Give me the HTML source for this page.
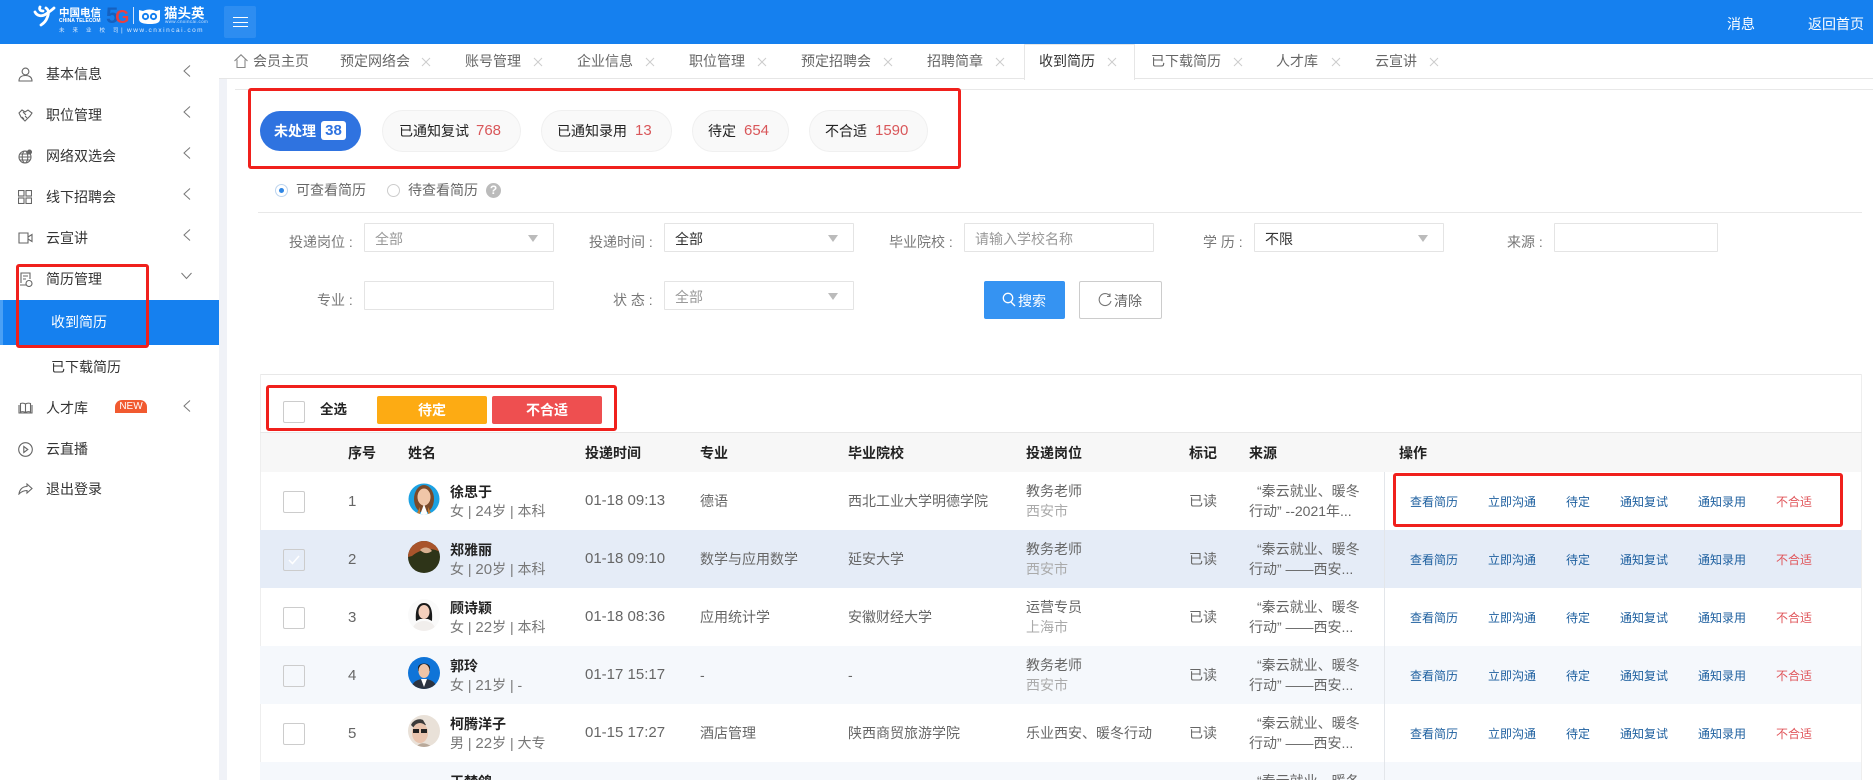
<!DOCTYPE html>
<html lang="zh-CN"><head><meta charset="utf-8"><title>收到简历</title>
<style>
*{box-sizing:border-box}
html,body{margin:0;padding:0;background:#fff;width:1873px;height:780px;overflow:hidden}
#w{position:absolute;left:0;top:0;width:1873px;height:780px;overflow:hidden;font:14px/20px "Liberation Sans","Noto Sans CJK SC",sans-serif;color:#666}
.t{position:absolute;white-space:nowrap;line-height:20px}
.a{position:absolute}
.side{color:#333}
.tab{color:#666;top:51px}
.lab{color:#777}
.box{position:absolute;border:1px solid #e4e4e4;height:29px;background:#fff;border-radius:1px}
.sel{color:#999}
.sel:after{content:"";position:absolute;right:15px;top:11px;border-left:5.5px solid transparent;border-right:5.5px solid transparent;border-top:7px solid #bbb}
.pill{position:absolute;top:110px;height:42px;border:1px solid #f0f0f0;background:#f9f9f9;border-radius:21px}
.p{color:#222;top:121px}.n{color:#d9575a;top:121px;font-size:15px}
.red{position:absolute;border:3px solid #f0201c;border-radius:3px;z-index:5}
.th{top:443px;font-weight:700;color:#222}
.row{position:absolute;left:260px;width:1601px;height:58px}
.row .t{margin-left:-260px}
.row svg,.row i{margin-left:-260px}
.cb{position:absolute;left:283px;top:19px;width:22px;height:22px;border:1px solid #ccc;border-radius:2px;display:block}
.av{position:absolute;left:408px;top:11px;width:32px;height:32px}
.nm{left:450px;top:10px;color:#222;font-weight:700}
.sb{left:450px;top:29px;color:#777;font-size:14px}
.s{font-size:15px}
.c1{left:348px;top:20px;font-size:15px}
.c2{left:585px;top:19px;font-size:15px}
.c3{left:700px;top:19px}
.c4{left:848px;top:19px}
.c5{left:1026px;top:9px}
.c5b{left:1026px;top:29px;color:#aaa}
.c5c{left:1026px;top:19px}
.c6{left:1189px;top:19px}
.c7{left:1257px;top:9px}
.c7b{left:1249px;top:29px}
.o{top:20px;font-size:12px;color:#1d5f9f}
.o1{left:1410px}.o2{left:1488px}.o3{left:1566px}.o4{left:1620px}.o5{left:1698px}.o6{left:1776px;color:#e0555a}
svg.i{position:absolute;fill:none;stroke:#666;stroke-width:1.1}
svg.x{position:absolute;top:57px;width:10px;height:10px;fill:none;stroke:#ccc;stroke-width:1}
svg.ch{position:absolute;left:183px;width:8px;height:12px;fill:none;stroke:#777;stroke-width:1}
</style></head><body><div id="w">

<!-- header -->
<div class="a" style="left:0;top:0;width:1873px;height:44px;background:#1580ef"></div>
<svg class="a" style="left:33px;top:5px" width="23" height="22" viewBox="0 0 23 22" fill="none" stroke="#fff" stroke-width="2.8" stroke-linecap="round"><path d="M2 7c2 4 7 5 11 2 3-2 6-4 8-6"/><path d="M13 3c3 2 3 6 1 10-1 3-3 5-6 7"/><path d="M7 2c-1 2 0 4 3 4"/></svg>
<div class="t" style="left:59px;top:4px;color:#fff;font-size:10.5px;font-weight:700;line-height:18px">中国电信</div>
<div class="t" style="left:59px;top:17px;color:#fff;font-size:5px;line-height:8px;font-weight:700">CHINA TELECOM</div>
<div class="t" style="left:106px;top:6px;color:#1561c0;font-size:22px;font-weight:700;line-height:20px">5<span style="color:#e84040;font-size:18px;margin-left:-3px">G</span></div>
<div class="a" style="left:133px;top:7px;width:1px;height:17px;background:#cfe3fb"></div>
<svg class="a" style="left:138px;top:7px" width="23" height="18" viewBox="0 0 23 18"><path d="M1 3l4 1c4-2 9-2 13 0l4-1v9c0 4-4 5-10 5S1 16 1 12z" fill="#fff"/><circle cx="7.5" cy="9.5" r="3.6" fill="#1580ef"/><circle cx="15.5" cy="9.5" r="3.6" fill="#1580ef"/><circle cx="7.5" cy="9.5" r="1.6" fill="#fff"/><circle cx="15.5" cy="9.5" r="1.6" fill="#fff"/></svg>
<div class="t" style="left:164px;top:5px;color:#fff;font-size:13.5px;font-weight:700;line-height:18px">猫头英</div>
<div class="t" style="left:165px;top:18px;color:#cfe3fb;font-size:4.5px;line-height:7px;letter-spacing:.4px">www.cnxincai.com</div>
<div class="t" style="left:59px;top:26px;color:#d9e9fc;font-size:5.5px;line-height:10px;letter-spacing:8px">未来业校司</div>
<div class="t" style="left:121px;top:26px;color:#d9e9fc;font-size:6.5px;line-height:10px">|</div>
<div class="t" style="left:127px;top:26px;color:#d9e9fc;font-size:6.5px;line-height:10px;letter-spacing:1.500px">www.cnxincai.com</div>
<div class="a" style="left:224px;top:6px;width:32px;height:32px;background:#2d8df1;border-radius:2px"></div>
<div class="a" style="left:233px;top:17px;width:15px;height:10px;border-top:1px solid #fff;border-bottom:1px solid #fff"></div>
<div class="a" style="left:233px;top:21.5px;width:15px;height:1px;background:#fff"></div>
<div class="t" style="left:1727px;top:14px;color:#fff">消息</div>
<div class="t" style="left:1808px;top:14px;color:#fff">返回首页</div>

<!-- sidebar -->
<div class="a" style="left:219px;top:79px;width:8px;height:701px;background:#f0f2f7"></div>
<svg class="i" style="left:18px;top:67px" width="15" height="15" viewBox="0 0 15 15"><circle cx="7.5" cy="4.5" r="3.4"/><path d="M1 14c0-4 3-5.500 6.500-5.500S14 10 14 14z"/></svg>
<div class="t side" style="left:46px;top:64px">基本信息</div>
<svg class="i" style="left:18px;top:108px" width="15" height="14" viewBox="0 0 15 14"><path d="M1 5l3-3 3 2 3-2 4 3-2 3-5 5-4-4zM5 4l3 3M4 9l2 2M7 8l2 2"/></svg>
<div class="t side" style="left:46px;top:105px">职位管理</div>
<svg class="i" style="left:18px;top:149px" width="15" height="15" viewBox="0 0 15 15"><circle cx="7" cy="8" r="6"/><ellipse cx="7" cy="8" rx="2.800" ry="6"/><path d="M1 8h12M2 5h10M2 11h10"/><circle cx="11.500" cy="3" r="2" fill="#666"/></svg>
<div class="t side" style="left:46px;top:146px">网络双选会</div>
<svg class="i" style="left:18px;top:190px" width="14" height="14" viewBox="0 0 14 14"><rect x=".5" y=".5" width="5.500" height="5.500"/><rect x="8" y=".5" width="5.500" height="5.500"/><rect x=".5" y="8" width="5.500" height="5.500"/><rect x="8" y="8" width="5.500" height="5.500"/></svg>
<div class="t side" style="left:46px;top:187px">线下招聘会</div>
<svg class="i" style="left:18px;top:232px" width="15" height="12" viewBox="0 0 15 12"><path d="M10 1H1v10h9zM10 5l4-2.500v7L10 7"/></svg>
<div class="t side" style="left:46px;top:228px">云宣讲</div>
<svg class="i" style="left:19px;top:272px" width="14" height="15" viewBox="0 0 14 15"><path d="M2 11V1h9v6M4 4h5M4 7h3M1 13h6"/><circle cx="10" cy="11.500" r="3"/></svg>
<div class="t side" style="left:46px;top:269px">简历管理</div>
<div class="a" style="left:0;top:300px;width:219px;height:45px;background:#1580ef"></div>
<div class="a" style="left:0;top:300px;width:3px;height:45px;background:#4aa0f5"></div>
<div class="t" style="left:51px;top:312px;color:#fff">收到简历</div>
<div class="t side" style="left:51px;top:357px">已下载简历</div>
<svg class="i" style="left:18px;top:402px" width="15" height="12" viewBox="0 0 15 12"><path d="M7.500 2C6 1 4 1 2.500 1.500V10c1.500-.5 3.500-.5 5 .5 1.500-1 3.500-1 5-.5V1.500C11 1 9 1 7.500 2zM7.500 2v8.500M1 3v8h13V3"/></svg>
<div class="t side" style="left:46px;top:398px">人才库</div>
<div class="a" style="left:115px;top:400px;width:32px;height:13px;background:#f15a30;border-radius:7px 7px 0 0;color:#fff;font-size:10px;line-height:14px;text-align:center;overflow:hidden">NEW</div>
<svg class="i" style="left:18px;top:442px" width="15" height="15" viewBox="0 0 15 15"><circle cx="7.500" cy="7.500" r="6.800"/><path d="M5.800 4.500l4 3-4 3z"/></svg>
<div class="t side" style="left:46px;top:439px">云直播</div>
<svg class="i" style="left:18px;top:483px" width="15" height="12" viewBox="0 0 15 12"><path d="M9 1l5 4.500L9 10V7.500C5 7.500 3 9 1 11c.5-4 3-7.500 8-7.500z"/></svg>
<div class="t side" style="left:46px;top:479px">退出登录</div>
<svg class="ch" style="top:65px" viewBox="0 0 8 12"><path d="M7 .5L1 6l6 5.500"/></svg>
<svg class="ch" style="top:106px" viewBox="0 0 8 12"><path d="M7 .5L1 6l6 5.500"/></svg>
<svg class="ch" style="top:147px" viewBox="0 0 8 12"><path d="M7 .5L1 6l6 5.500"/></svg>
<svg class="ch" style="top:188px" viewBox="0 0 8 12"><path d="M7 .5L1 6l6 5.500"/></svg>
<svg class="ch" style="top:229px" viewBox="0 0 8 12"><path d="M7 .5L1 6l6 5.500"/></svg>
<svg class="ch" style="top:400px" viewBox="0 0 8 12"><path d="M7 .5L1 6l6 5.500"/></svg>
<svg class="a" style="left:181px;top:272px;fill:none;stroke:#777;stroke-width:1" width="11" height="8" viewBox="0 0 11 8"><path d="M.5 1l5 5.500 5-5.500"/></svg>

<!-- tabs -->
<div class="a" style="left:219px;top:78px;width:1654px;height:1px;background:#e6e6e6"></div>
<div class="a" style="left:1024px;top:44px;width:111px;height:36px;background:#fff;border:1px solid #e6e6e6;border-bottom:0"></div>
<svg class="i" style="left:234px;top:54px;stroke:#888" width="14" height="14" viewBox="0 0 14 14"><path d="M.5 7L7 .8 13.500 7M3 5.500V13.500h8V5.500"/></svg>
<div class="t tab" style="left:253px">会员主页</div>
<div class="t tab" style="left:340px">预定网络会</div><svg class="x" style="left:421px" viewBox="0 0 10 10"><path d="M1 1l8 8M9 1l-8 8"/></svg>
<div class="t tab" style="left:465px">账号管理</div><svg class="x" style="left:533px" viewBox="0 0 10 10"><path d="M1 1l8 8M9 1l-8 8"/></svg>
<div class="t tab" style="left:577px">企业信息</div><svg class="x" style="left:645px" viewBox="0 0 10 10"><path d="M1 1l8 8M9 1l-8 8"/></svg>
<div class="t tab" style="left:689px">职位管理</div><svg class="x" style="left:757px" viewBox="0 0 10 10"><path d="M1 1l8 8M9 1l-8 8"/></svg>
<div class="t tab" style="left:801px">预定招聘会</div><svg class="x" style="left:883px" viewBox="0 0 10 10"><path d="M1 1l8 8M9 1l-8 8"/></svg>
<div class="t tab" style="left:927px">招聘简章</div><svg class="x" style="left:995px" viewBox="0 0 10 10"><path d="M1 1l8 8M9 1l-8 8"/></svg>
<div class="t tab" style="left:1039px;color:#333">收到简历</div><svg class="x" style="left:1107px" viewBox="0 0 10 10"><path d="M1 1l8 8M9 1l-8 8"/></svg>
<div class="t tab" style="left:1151px">已下载简历</div><svg class="x" style="left:1233px" viewBox="0 0 10 10"><path d="M1 1l8 8M9 1l-8 8"/></svg>
<div class="t tab" style="left:1276px">人才库</div><svg class="x" style="left:1331px" viewBox="0 0 10 10"><path d="M1 1l8 8M9 1l-8 8"/></svg>
<div class="t tab" style="left:1375px">云宣讲</div><svg class="x" style="left:1429px" viewBox="0 0 10 10"><path d="M1 1l8 8M9 1l-8 8"/></svg>

<!-- status pills -->
<div class="a" style="left:235px;top:89px;width:1638px;height:1px;background:#e8e8e8"></div>
<div class="red" style="left:248px;top:88px;width:713px;height:81px"></div>
<div class="a" style="left:260px;top:111px;width:101px;height:40px;background:#2f73e0;border-radius:20px"></div>
<div class="t" style="left:274px;top:121px;color:#fff;font-weight:700">未处理</div>
<div class="a" style="left:321px;top:121px;width:25px;height:19px;background:#fff;border-radius:3px;color:#2f73e0;font-weight:700;text-align:center;line-height:19px;font-size:15px">38</div>
<div class="pill" style="left:382px;width:139px"></div><div class="t p" style="left:399px">已通知复试</div><div class="t n" style="left:476px">768</div>
<div class="pill" style="left:541px;width:131px"></div><div class="t p" style="left:557px">已通知录用</div><div class="t n" style="left:635px">13</div>
<div class="pill" style="left:692px;width:97px"></div><div class="t p" style="left:708px">待定</div><div class="t n" style="left:744px">654</div>
<div class="pill" style="left:809px;width:119px"></div><div class="t p" style="left:825px">不合适</div><div class="t n" style="left:875px">1590</div>

<!-- radios -->
<div class="a" style="left:275px;top:184px;width:13px;height:13px;border:1px solid #bcd4ef;border-radius:50%"></div>
<div class="a" style="left:279px;top:188px;width:5px;height:5px;background:#2f86e4;border-radius:50%"></div>
<div class="t" style="left:296px;top:180px">可查看简历</div>
<div class="a" style="left:387px;top:184px;width:13px;height:13px;border:1px solid #ccc;border-radius:50%"></div>
<div class="t" style="left:408px;top:180px">待查看简历</div>
<div class="a" style="left:486px;top:183px;width:15px;height:15px;background:#bbb;border-radius:50%;color:#fff;font-size:12px;font-weight:700;text-align:center;line-height:15px">?</div>
<div class="a" style="left:258px;top:212px;width:1604px;height:1px;background:#e8e8e8"></div>

<!-- filter form -->
<div class="t lab" style="left:289px;top:232px">投递岗位&nbsp;:</div>
<div class="box sel" style="left:364px;top:223px;width:190px;padding:5px 10px">全部</div>
<div class="t lab" style="left:589px;top:232px">投递时间&nbsp;:</div>
<div class="box sel" style="left:664px;top:223px;width:190px;padding:5px 10px;color:#333">全部</div>
<div class="t lab" style="left:889px;top:232px">毕业院校&nbsp;:</div>
<div class="box" style="left:964px;top:223px;width:190px;padding:5px 10px;color:#999">请输入学校名称</div>
<div class="t lab" style="left:1203px;top:232px">学&nbsp;历&nbsp;:</div>
<div class="box sel" style="left:1254px;top:223px;width:190px;padding:5px 10px;color:#333">不限</div>
<div class="t lab" style="left:1507px;top:232px">来源&nbsp;:</div>
<div class="box" style="left:1554px;top:223px;width:164px"></div>
<div class="t lab" style="left:317px;top:290px">专业&nbsp;:</div>
<div class="box" style="left:364px;top:281px;width:190px"></div>
<div class="t lab" style="left:613px;top:290px">状&nbsp;态&nbsp;:</div>
<div class="box sel" style="left:664px;top:281px;width:190px;padding:5px 10px">全部</div>
<div class="a" style="left:984px;top:281px;width:81px;height:38px;background:#3593f2;border-radius:2px"></div>
<svg class="a" style="left:1002px;top:292px;fill:none;stroke:#fff;stroke-width:1.3" width="14" height="15" viewBox="0 0 14 15"><circle cx="6" cy="6" r="4.700"/><path d="M9 10l4 4"/></svg>
<div class="t" style="left:1018px;top:291px;color:#fff">搜索</div>
<div class="a" style="left:1079px;top:281px;width:83px;height:38px;border:1px solid #ccc;border-radius:2px"></div>
<svg class="a" style="left:1098px;top:293px;fill:none;stroke:#777;stroke-width:1.100" width="14" height="14" viewBox="0 0 14 14"><path d="M12 3A6 6 0 1 0 13 8M12 .5V3.500H9"/></svg>
<div class="t" style="left:1114px;top:291px">清除</div>

<!-- table -->
<div class="a" style="left:260px;top:374px;width:1602px;height:1px;background:#e8e8e8"></div>
<div class="a" style="left:260px;top:374px;width:1px;height:406px;background:#eee"></div>
<div class="a" style="left:1861px;top:374px;width:1px;height:406px;background:#eee"></div>
<div class="a" style="left:260px;top:432px;width:1602px;height:1px;background:#e8e8e8"></div>
<div class="a" style="left:261px;top:433px;width:1600px;height:39px;background:#f7f7f7"></div>
<div class="red" style="left:266px;top:385px;width:351px;height:46px"></div>
<div class="a" style="left:283px;top:401px;width:22px;height:22px;border:1px solid #ccc;border-radius:2px"></div>
<div class="t" style="left:320px;top:400px;color:#222;font-weight:700;font-size:13.5px">全选</div>
<div class="a" style="left:377px;top:396px;width:110px;height:28px;background:#fdab13;border-radius:2px;color:#fff;font-weight:700;text-align:center;line-height:28px">待定</div>
<div class="a" style="left:492px;top:396px;width:110px;height:28px;background:#ee4f50;border-radius:2px;color:#fff;font-weight:700;text-align:center;line-height:28px">不合适</div>
<div class="t th" style="left:348px">序号</div>
<div class="t th" style="left:408px">姓名</div>
<div class="t th" style="left:585px">投递时间</div>
<div class="t th" style="left:700px">专业</div>
<div class="t th" style="left:848px">毕业院校</div>
<div class="t th" style="left:1026px">投递岗位</div>
<div class="t th" style="left:1189px">标记</div>
<div class="t th" style="left:1249px">来源</div>
<div class="t th" style="left:1399px">操作</div>

<div class="row" style="top:472px">
<i class="cb"></i><div class="t c1">1</div>
<svg class="av" viewBox="0 0 32 32"><defs><clipPath id="c1"><circle cx="16" cy="16" r="15.500"/></clipPath></defs><g clip-path="url(#c1)"><rect width="32" height="32" fill="#1ba1e2"/><ellipse cx="16" cy="16" rx="10" ry="14" fill="#7a4a2a"/><ellipse cx="16" cy="14" rx="6.500" ry="8.500" fill="#f0c6a8"/><path d="M12 32l4-11 4 11z" fill="#fff"/><path d="M8 32l4-8v8zM24 32l-4-8v8z" fill="#c07a30"/></g></svg>
<div class="t nm">徐思于</div><div class="t sb">女 | <span class="s">24</span>岁 | 本科</div>
<div class="t c2">01-18 09:13</div><div class="t c3">德语</div><div class="t c4">西北工业大学明德学院</div>
<div class="t c5">教务老师</div><div class="t c5b">西安市</div><div class="t c6">已读</div>
<div class="t c7">“秦云就业、暖冬</div><div class="t c7b">行动” --2021年...</div>
<div class="t o o1">查看简历</div><div class="t o o2">立即沟通</div><div class="t o o3">待定</div><div class="t o o4">通知复试</div><div class="t o o5">通知录用</div><div class="t o o6">不合适</div>
</div>

<div class="row" style="top:530px;background:#e5ecf7">
<i class="cb"></i><svg class="a" style="left:288px;top:25px;fill:none;stroke:#fff;stroke-width:1.500" width="12" height="10" viewBox="0 0 12 10"><path d="M1 5l3.500 3.500L11 1"/></svg><div class="t c1">2</div>
<svg class="av" viewBox="0 0 32 32"><defs><clipPath id="c2"><circle cx="16" cy="16" r="16"/></clipPath></defs><g clip-path="url(#c2)"><rect width="32" height="32" fill="#2e3418"/><path d="M0 0h32v11C24 6 12 8 4 15L0 16z" fill="#a9542b"/><path d="M12 9c4-4 9-3 12 1-4 3-8 3-12-1z" fill="#d8b090"/></g></svg>
<div class="t nm">郑雅丽</div><div class="t sb">女 | <span class="s">20</span>岁 | 本科</div>
<div class="t c2">01-18 09:10</div><div class="t c3">数学与应用数学</div><div class="t c4">延安大学</div>
<div class="t c5">教务老师</div><div class="t c5b">西安市</div><div class="t c6">已读</div>
<div class="t c7">“秦云就业、暖冬</div><div class="t c7b">行动” ——西安...</div>
<div class="t o o1">查看简历</div><div class="t o o2">立即沟通</div><div class="t o o3">待定</div><div class="t o o4">通知复试</div><div class="t o o5">通知录用</div><div class="t o o6">不合适</div>
</div>

<div class="row" style="top:588px">
<i class="cb"></i><div class="t c1">3</div>
<svg class="av" viewBox="0 0 32 32"><defs><clipPath id="c3"><circle cx="16" cy="16" r="16"/></clipPath></defs><g clip-path="url(#c3)"><rect width="32" height="32" fill="#fafafa"/><path d="M8 22C7 10 10 4 16 4s9 6 8 18l-4-2h-8z" fill="#1a1a1a"/><ellipse cx="16" cy="13" rx="5.500" ry="7" fill="#f4cfbc"/><path d="M4 32c1-7 6-10 12-10s11 3 12 10z" fill="#f1eeec"/></g></svg>
<div class="t nm">顾诗颖</div><div class="t sb">女 | <span class="s">22</span>岁 | 本科</div>
<div class="t c2">01-18 08:36</div><div class="t c3">应用统计学</div><div class="t c4">安徽财经大学</div>
<div class="t c5">运营专员</div><div class="t c5b">上海市</div><div class="t c6">已读</div>
<div class="t c7">“秦云就业、暖冬</div><div class="t c7b">行动” ——西安...</div>
<div class="t o o1">查看简历</div><div class="t o o2">立即沟通</div><div class="t o o3">待定</div><div class="t o o4">通知复试</div><div class="t o o5">通知录用</div><div class="t o o6">不合适</div>
</div>

<div class="row" style="top:646px;background:#f5f8fc">
<i class="cb"></i><div class="t c1">4</div>
<svg class="av" viewBox="0 0 32 32"><defs><clipPath id="c4"><circle cx="16" cy="16" r="16"/></clipPath></defs><g clip-path="url(#c4)"><rect width="32" height="32" fill="#0f74d8"/><path d="M10 11c0-6 12-6 12 0v3H10z" fill="#1f1a18"/><ellipse cx="16" cy="14" rx="5.500" ry="7" fill="#eec4a8"/><path d="M3 32c1-7 6-10 13-10s12 3 13 10z" fill="#2c3340"/><path d="M13 22h6l-3 8z" fill="#fff"/></g></svg>
<div class="t nm">郭玲</div><div class="t sb">女 | <span class="s">21</span>岁 | -</div>
<div class="t c2">01-17 15:17</div><div class="t c3">-</div><div class="t c4">-</div>
<div class="t c5">教务老师</div><div class="t c5b">西安市</div><div class="t c6">已读</div>
<div class="t c7">“秦云就业、暖冬</div><div class="t c7b">行动” ——西安...</div>
<div class="t o o1">查看简历</div><div class="t o o2">立即沟通</div><div class="t o o3">待定</div><div class="t o o4">通知复试</div><div class="t o o5">通知录用</div><div class="t o o6">不合适</div>
</div>

<div class="row" style="top:704px">
<i class="cb"></i><div class="t c1">5</div>
<svg class="av" viewBox="0 0 32 32"><defs><clipPath id="c5"><circle cx="16" cy="16" r="16"/></clipPath></defs><g clip-path="url(#c5)"><rect width="32" height="32" fill="#e9e1d8"/><path d="M3 10c2-5 8-7 12-5l3 5-12 3z" fill="#3a3a3a"/><ellipse cx="12" cy="18" rx="8" ry="10" fill="#e8c4ae"/><rect x="5" y="14" width="6" height="4" fill="#222"/><rect x="13" y="14" width="6" height="4" fill="#222"/><path d="M8 32c4-5 10-5 16 0z" fill="#b9a99a"/></g></svg>
<div class="t nm">柯腾洋子</div><div class="t sb">男 | <span class="s">22</span>岁 | 大专</div>
<div class="t c2">01-15 17:27</div><div class="t c3">酒店管理</div><div class="t c4">陕西商贸旅游学院</div>
<div class="t c5c">乐业西安、暖冬行动</div><div class="t c6">已读</div>
<div class="t c7">“秦云就业、暖冬</div><div class="t c7b">行动” ——西安...</div>
<div class="t o o1">查看简历</div><div class="t o o2">立即沟通</div><div class="t o o3">待定</div><div class="t o o4">通知复试</div><div class="t o o5">通知录用</div><div class="t o o6">不合适</div>
</div>

<div class="row" style="top:762px;height:18px;overflow:hidden;background:#f5f8fc">
<svg class="av" style="top:13px" viewBox="0 0 32 32"><defs><clipPath id="c6"><circle cx="16" cy="16" r="16"/></clipPath></defs><g clip-path="url(#c6)"><rect width="32" height="32" fill="#f5f8fc"/><path d="M7 20C7 6 25 6 25 20z" fill="#222"/></g></svg>
<div class="t nm">王梦鸽</div>
<div class="t c7">“秦云就业、暖冬</div>
</div>

<div class="a" style="left:1384px;top:472px;width:1px;height:308px;background:#e3e6ea"></div>
<div class="red" style="left:1393px;top:473px;width:450px;height:54px"></div>
<div class="red" style="left:16px;top:264px;width:133px;height:84px"></div>
</div></body></html>
